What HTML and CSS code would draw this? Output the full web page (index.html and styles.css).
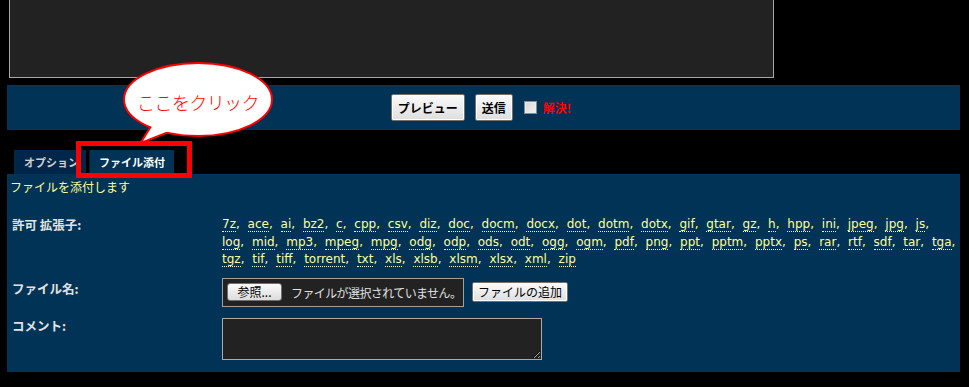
FILE: index.html
```html
<!DOCTYPE html>
<html lang="ja">
<head>
<meta charset="utf-8">
<title>ファイル添付</title>
<link rel="stylesheet" href="styles.css">
</head>
<body>
<div class="page">
  <textarea class="msg" readonly></textarea>

  <div class="bar">
    <button class="btn btn-main">プレビュー</button>
    <button class="btn btn-main">送信</button>
    <span class="check"></span>
    <span class="solved">解決!</span>
  </div>

  <div class="tabs">
    <div class="tab">オプション</div>
    <div class="tab tab-active">ファイル添付</div>
  </div>

  <div class="panel">
    <div class="intro">ファイルを添付します</div>

    <div class="row row-ext">
      <div class="label">許可 拡張子:</div>
      <div class="exts"><a class="ext">7z</a>, <a class="ext">ace</a>, <a class="ext">ai</a>, <a class="ext">bz2</a>, <a class="ext">c</a>, <a class="ext">cpp</a>, <a class="ext">csv</a>, <a class="ext">diz</a>, <a class="ext">doc</a>, <a class="ext">docm</a>, <a class="ext">docx</a>, <a class="ext">dot</a>, <a class="ext">dotm</a>, <a class="ext">dotx</a>, <a class="ext">gif</a>, <a class="ext">gtar</a>, <a class="ext">gz</a>, <a class="ext">h</a>, <a class="ext">hpp</a>, <a class="ext">ini</a>, <a class="ext">jpeg</a>, <a class="ext">jpg</a>, <a class="ext">js</a>, <a class="ext">log</a>, <a class="ext">mid</a>, <a class="ext">mp3</a>, <a class="ext">mpeg</a>, <a class="ext">mpg</a>, <a class="ext">odg</a>, <a class="ext">odp</a>, <a class="ext">ods</a>, <a class="ext">odt</a>, <a class="ext">ogg</a>, <a class="ext">ogm</a>, <a class="ext">pdf</a>, <a class="ext">png</a>, <a class="ext">ppt</a>, <a class="ext">pptm</a>, <a class="ext">pptx</a>, <a class="ext">ps</a>, <a class="ext">rar</a>, <a class="ext">rtf</a>, <a class="ext">sdf</a>, <a class="ext">tar</a>, <a class="ext">tga</a>, <a class="ext">tgz</a>, <a class="ext">tif</a>, <a class="ext">tiff</a>, <a class="ext">torrent</a>, <a class="ext">txt</a>, <a class="ext">xls</a>, <a class="ext">xlsb</a>, <a class="ext">xlsm</a>, <a class="ext">xlsx</a>, <a class="ext">xml</a>, <a class="ext">zip</a></div>
    </div>

    <div class="row row-file">
      <div class="label">ファイル名:</div>
      <div class="file-line">
        <div class="file-box">
          <span class="browse">参照...</span>
          <span class="nofile">ファイルが選択されていません。</span>
        </div>
        <button class="btn btn-add">ファイルの追加</button>
      </div>
    </div>

    <div class="row row-comment">
      <div class="label">コメント:</div>
      <textarea class="comment"></textarea>
    </div>
  </div>

  <div class="callout">
    <svg class="callout-shape" width="180" height="100" viewBox="0 0 180 100">
      <polygon points="43,70 33,86 61,75" fill="#ffffff" stroke="#ff0000" stroke-width="4" stroke-linejoin="miter"/>
      <ellipse cx="88" cy="44.5" rx="74" ry="36.5" fill="#ffffff" stroke="#ff0000" stroke-width="2"/>
      <polygon points="43,70 33,86 61,75" fill="#ffffff"/>
    </svg>
    <div class="callout-text">ここをクリック</div>
  </div>

  <div class="highlight"></div>
</div>
</body>
</html>
```

FILE: styles.css
```css
html, body {
  margin: 0;
  padding: 0;
  background: #000000;
}

body {
  font-family: "Noto Sans CJK JP", "DejaVu Sans", sans-serif;
  color: #dddddd;
  overflow: hidden;
}

.page {
  position: relative;
  display: flow-root;
  width: 953px;
  padding: 0 7px;
}

.msg {
  display: block;
  box-sizing: border-box;
  width: 765px;
  height: 90px;
  margin: -12px 0 0 2px;
  padding: 0;
  background: #222222;
  border: 1px solid #a8a8a8;
  resize: none;
  outline: none;
}

.bar {
  margin-top: 7px;
  height: 45px;
  background: #003355;
  display: flex;
  align-items: center;
  justify-content: center;
  padding-right: 5px;
}

.btn {
  box-sizing: border-box;
  font-family: "Noto Sans CJK JP", sans-serif;
  color: #000000;
  background: linear-gradient(#fbfbfb, #dedede);
  border: 1px solid #707070;
  border-radius: 2px;
  box-shadow: inset 0 0 0 1px #ffffff;
  margin: 0;
  cursor: default;
  white-space: nowrap;
}

.btn-main {
  height: 27px;
  padding: 0 6px;
  font-size: 12px;
  font-weight: bold;
  margin-right: 10px;
}

.check {
  box-sizing: border-box;
  width: 13px;
  height: 13px;
  border: 1px solid #8a8a8a;
  background: linear-gradient(135deg, #d6d6d6, #f4f4f4);
  box-shadow: inset 0 0 0 1px #ececec;
  margin-left: 1px;
  margin-right: 6px;
}

.solved {
  color: #ff0000;
  font-size: 12px;
  font-weight: bold;
}

.tabs {
  margin-top: 20px;
  padding-left: 7px;
  display: flex;
  gap: 3px;
  height: 24px;
}

.tab {
  box-sizing: border-box;
  height: 24px;
  padding: 0 7px 0 10px;
  background: #00264a;
  color: #cfcfcf;
  font-size: 11px;
  font-weight: bold;
  line-height: 24px;
  white-space: nowrap;
}

.tab-active {
  background: #003355;
  color: #ffffff;
  border-left: 1px solid #001c38;
  padding: 0 9px 0 9px;
}

.panel {
  background: #003355;
  padding: 4px 3px 12px 5px;
}

.intro {
  color: #ffff99;
  font-size: 12px;
  line-height: 18px;
  margin-left: -2px;
}

.row {
  display: grid;
  grid-template-columns: 210px 736px;
  align-items: start;
}

.label {
  font-size: 12.5px;
  font-weight: bold;
  color: #e2e2e2;
  line-height: 17.5px;
}

.row-ext {
  margin-top: 20px;
}

.exts {
  font-family: "DejaVu Sans", sans-serif;
  font-size: 12px;
  line-height: 17.5px;
  word-spacing: 4px;
  color: #ffff99;
}

.ext {
  color: #ffff99;
  text-decoration: none;
  border-bottom: 1px dotted #ffff99;
}

.row-file {
  margin-top: 9px;
}

.row-file .label {
  padding-top: 2px;
}

.file-line {
  display: flex;
  align-items: center;
  gap: 8px;
}

.file-box {
  box-sizing: border-box;
  width: 242px;
  height: 29px;
  display: flex;
  align-items: center;
  background: #222222;
  border: 1px solid #a0a0a0;
  padding-left: 4px;
  white-space: nowrap;
  overflow: hidden;
}

.browse {
  box-sizing: border-box;
  width: 55px;
  height: 18px;
  font-size: 12px;
  line-height: 16px;
  color: #000000;
  text-align: center;
  background: linear-gradient(#fbfbfb, #dcdcdc);
  border: 1px solid #707070;
  border-radius: 3px;
  flex: none;
}

.nofile {
  margin-left: 9px;
  font-size: 12px;
  letter-spacing: -0.6px;
  color: #e0e0e0;
}

.btn-add {
  width: 96px;
  height: 20px;
  padding: 0;
  font-size: 12px;
  font-weight: normal;
  line-height: 18px;
}

.row-comment {
  margin-top: 11px;
}

.row-comment .label {
  margin-top: -1px;
}

.comment {
  display: block;
  box-sizing: border-box;
  width: 320px;
  height: 42px;
  margin: 0;
  padding: 0;
  background: #222222;
  border: 1px solid #aaaaaa;
  outline: none;
}

.callout {
  position: absolute;
  left: 110px;
  top: 55px;
  width: 180px;
  height: 100px;
}

.callout-shape {
  display: block;
}

.callout-text {
  position: absolute;
  left: 13px;
  top: 7px;
  width: 150px;
  height: 75px;
  display: flex;
  align-items: center;
  justify-content: center;
  padding-top: 5px;
  box-sizing: border-box;
  color: #ff0000;
  font-family: "Noto Sans CJK JP", sans-serif;
  font-weight: 300;
  font-size: 18px;
  letter-spacing: -0.6px;
}

.highlight {
  position: absolute;
  left: 76px;
  top: 141px;
  width: 116px;
  height: 37px;
  box-sizing: border-box;
  border: 5px solid #ff0000;
}
```
